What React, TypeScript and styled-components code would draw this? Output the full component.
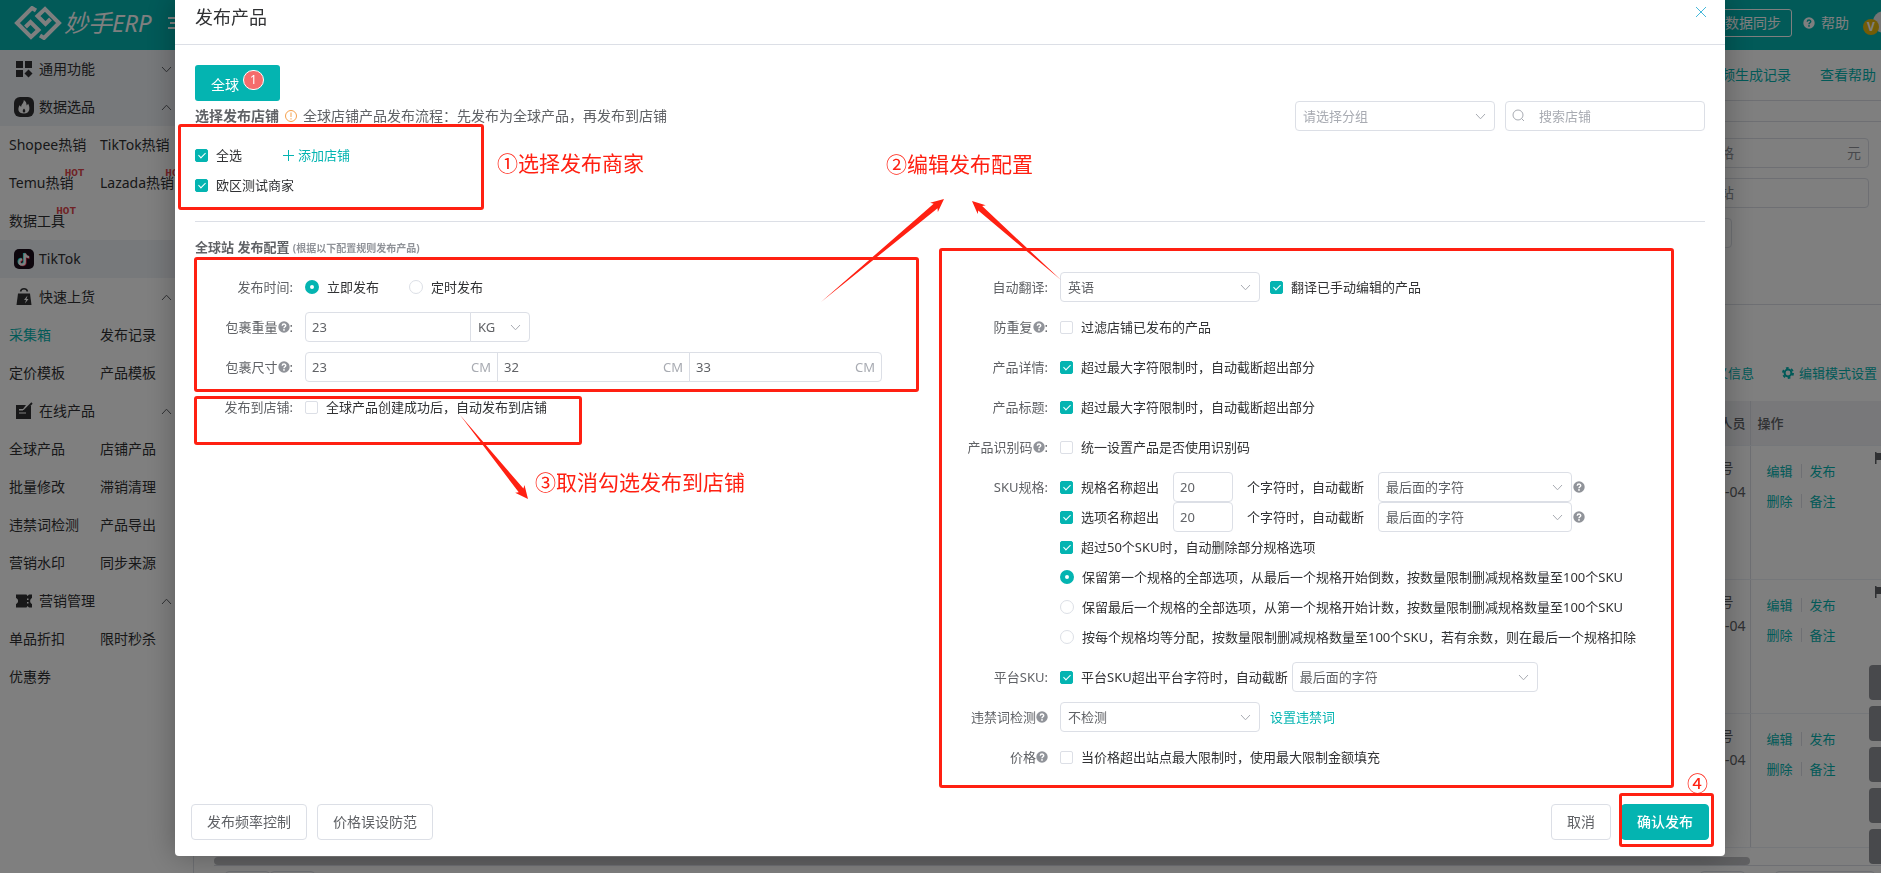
import React, { useId } from "react";
import styled, { createGlobalStyle, css } from "styled-components";

const teal = "#04b4b1";
const red = "#ff2012";
const line = "#dcdfe6";
const fontStack = '"Noto Sans", "Noto Sans CJK SC", sans-serif';

const GlobalStyle = createGlobalStyle`
  *, *::before, *::after { box-sizing: border-box; }
  body { margin: 0; background: #fff; font: 14px/20px ${fontStack}; color: #303133; overflow: hidden; }
  button, input, select { font: inherit; color: inherit; margin: 0; }
  a { color: ${teal}; text-decoration: none; }
`;

/* ---------- page behind the dialog ---------- */

const Page = styled.div`
  min-height: 100vh;
  display: flex;
  flex-direction: column;
`;

const TopBar = styled.header`
  height: 50px;
  background: ${teal};
  color: #fff;
  display: flex;
  align-items: center;
  justify-content: space-between;
  padding: 0 0 4px 14px;
`;

const Brand = styled.div`
  display: flex;
  align-items: center;
  gap: 2px;
`;

const BrandName = styled.span`
  font-size: 24px;
  line-height: 32px;
  font-style: italic;
`;

const MenuIcon = styled.svg`
  margin-left: 14px;
`;

const TopActions = styled.div`
  display: flex;
  align-items: center;
  gap: 11px;
`;

const SyncButton = styled.button`
  height: 28px;
  padding: 0 10px;
  border: 1px solid #fff;
  border-radius: 3px;
  background: none;
`;

const HelpEntry = styled.a`
  display: flex;
  align-items: center;
  gap: 6px;
  color: #fff;
`;

const Avatar = styled.div`
  position: relative;
  width: 21px;
  height: 32px;
  overflow: hidden;
  &::before {
    content: "";
    position: absolute;
    left: 13px;
    top: 4px;
    width: 22px;
    height: 22px;
    border-radius: 50%;
    background: #e8e8e8;
  }
`;

const VipMark = styled.span`
  position: absolute;
  left: 3px;
  top: 12px;
  width: 16px;
  height: 16px;
  border-radius: 50%;
  background: #e6b80c;
  font-size: 12px;
  line-height: 16px;
  font-weight: 700;
  text-align: center;
`;

const Columns = styled.div`
  flex: 1;
  display: flex;
`;

const SideNav = styled.nav`
  width: 194px;
  border-right: 1px solid ${line};
`;

const SideHeading = styled.div<{ $tinted?: boolean }>`
  height: 38px;
  padding: 0 21px 0 14px;
  display: flex;
  align-items: center;
  gap: 5px;
  background: ${(p) => (p.$tinted ? "#eff2f7" : "none")};
  & > svg + svg { margin-left: auto; }
`;

const SideLinks = styled.div`
  display: grid;
  grid-template-columns: 91px 1fr;
  padding-left: 9px;
`;

const SideLink = styled.a<{ $active?: boolean }>`
  height: 38px;
  line-height: 38px;
  white-space: nowrap;
  color: ${(p) => (p.$active ? teal : "#303133")};
`;

const HotWrap = styled.span`
  position: relative;
`;

const Hot = styled.span`
  position: absolute;
  right: -11px;
  top: -6px;
  font: 700 11px/12px "Liberation Mono", monospace;
  color: #e0474c;
`;

const Main = styled.main`
  flex: 1;
  display: flex;
  flex-direction: column;
`;

const LinkBar = styled.div`
  height: 51px;
  display: flex;
  align-items: center;
  justify-content: flex-end;
  gap: 29px;
  padding-right: 5px;
  border-bottom: 1px solid ${line};
`;

const FilterCard = styled.section`
  margin-top: 20px;
  height: 184px;
  padding: 16px 12px;
  border-top: 1px solid ${line};
  border-bottom: 1px solid ${line};
  display: flex;
  flex-direction: column;
  align-items: flex-end;
  gap: 10px;
  color: #909399;
`;

const FilterBox = styled.div<{ $short?: boolean }>`
  width: 200px;
  height: 30px;
  margin-right: ${(p) => (p.$short ? 137 : 0)}px;
  padding: 0 7px 0 50px;
  display: flex;
  align-items: center;
  justify-content: space-between;
  border: 1px solid ${line};
  border-radius: 4px;
`;

const ToolRow = styled.div`
  height: 96px;
  padding: 58px 4px 0 0;
  display: flex;
  justify-content: flex-end;
  gap: 28px;
  font-size: 13px;
  & a { display: flex; align-items: center; gap: 5px; height: 20px; }
`;

const DataTable = styled.table`
  width: calc(100% - 20px);
  margin-left: 20px;
  border-collapse: collapse;
  font-size: 13px;
  color: #606266;
  & th { height: 44px; background: #f0f1f4; font-weight: 500; border-bottom: 1px solid #ebeef5; text-align: right; padding: 0 4px; }
  & th:last-child { text-align: left; padding-left: 7px; }
  & td { height: 134px; padding: 10px 4px; vertical-align: top; text-align: right; border-bottom: 1px solid #ebeef5; font-size: 14px; line-height: 24px; }
  & td:last-child { width: 131px; padding: 10px 0 0 16px; text-align: left; font-size: 13px; }
  & th:last-child, & td:last-child { border-left: 1px solid ${line}; position: relative; }
`;

const OwnerName = styled.div`
  padding-right: 12px;
`;

const RowActions = styled.div`
  display: flex;
  height: 30px;
  align-items: center;
  gap: 8px;
`;

const Separator = styled.span`
  width: 1px;
  height: 14px;
  background: ${line};
`;

const RowFlag = styled.svg`
  position: absolute;
  right: 0;
  top: 6px;
`;

const TableScroll = styled.div`
  margin: 9px 131px 0 20px;
  height: 8px;
  border-radius: 4px;
  background: #c0c1c4;
`;

const Pager = styled.div`
  margin-left: 20px;
  padding: 5px 6px 0 11px;
  border-top: 1px solid ${line};
  display: flex;
  height: 9px;
  overflow: hidden;
`;

const PagerBox = styled.div<{ $width: number; $first?: boolean }>`
  width: ${(p) => p.$width}px;
  height: 30px;
  margin-left: ${(p) => (p.$first ? "auto" : 0)};
  margin-right: ${(p) => (p.$first ? 30 : 0)}px;
  border: 1px solid ${line};
  border-radius: 4px;
`;

const FloatTools = styled.div`
  position: fixed;
  right: 0;
  bottom: 9px;
  display: grid;
  gap: 6px;
`;

const FloatTool = styled.button`
  width: 12px;
  height: 35px;
  border: 0;
  border-radius: 4px 0 0 4px;
  background: #909399;
`;

/* ---------- dialog ---------- */

const Overlay = styled.div`
  position: fixed;
  inset: 0;
  padding: 0 156px 0 175px;
  background: rgba(0, 0, 0, 0.5);
`;

const Dialog = styled.section`
  position: relative;
  background: #fff;
  border-radius: 0 0 4px 4px;
  box-shadow: 0 0 30px rgba(0, 0, 0, 0.3);
`;

const DialogHead = styled.header`
  height: 45px;
  padding: 0 19px 10px 20px;
  display: flex;
  align-items: center;
  justify-content: space-between;
  border-bottom: 1px solid ${line};
`;

const DialogTitle = styled.h1`
  margin: 0;
  font-size: 18px;
  line-height: 24px;
  font-weight: 400;
`;

const CloseButton = styled.button`
  width: 10px;
  height: 10px;
  padding: 0;
  margin-bottom: 10px;
  border: 0;
  background: none;
  display: flex;
`;

const DialogBody = styled.div`
  padding: 20px 20px 16px;
  font-size: 13px;
`;

const SiteTab = styled.button`
  height: 36px;
  padding: 0 16px;
  border: 0;
  border-radius: 3px;
  background: ${teal};
  color: #fff;
  font-size: 14px;
  line-height: 20px;
  display: flex;
  gap: 4px;
  align-items: flex-start;
`;

const TabText = styled.span`
  padding-top: 10px;
`;

const Badge = styled.span`
  margin: 5px 0 0;
  width: 21px;
  height: 20px;
  border: 1px solid #fff;
  border-radius: 10px;
  background: #f56c6c;
  font-size: 12px;
  line-height: 18px;
`;

const ShopHead = styled.div`
  height: 30px;
  display: flex;
  align-items: center;
  font-size: 14px;
  color: #606266;
`;

const ShopTools = styled.div`
  margin-left: auto;
  display: flex;
  gap: 10px;
  font-size: 13px;
`;

const NoticeIcon = styled.svg`
  margin: 0 6px;
`;

const ShopRow = styled.div`
  height: 30px;
  display: flex;
  align-items: center;
`;

const ShopList = styled.div`
  padding: 9px 0 21px;
  border-bottom: 1px solid ${line};
`;

const AddShop = styled.a`
  margin-left: 40px;
  display: flex;
  align-items: center;
  gap: 4px;
`;

const SectionTitle = styled.h2`
  margin: 0;
  padding: 15px 0 14px;
  font-size: 13px;
  line-height: 20px;
  font-weight: 700;
  color: #606266;
  & small { font-size: 10px; color: #909399; }
`;

const FormColumns = styled.div`
  display: grid;
  grid-template-columns: 1fr 1fr;
`;

const FormColumn = styled.div`
  display: flex;
  flex-direction: column;
  gap: 10px;
`;

const FieldRow = styled.div`
  display: grid;
  grid-template-columns: 98px 1fr;
  gap: 12px;
`;

const FieldLabel = styled.div`
  height: 30px;
  display: flex;
  align-items: center;
  justify-content: flex-end;
  color: #606266;
  white-space: nowrap;
`;

const Line = styled.div<{ $gap?: number }>`
  min-height: 30px;
  display: flex;
  align-items: center;
  gap: ${(p) => p.$gap ?? 0}px;
  white-space: nowrap;
`;

const ChoiceLabel = styled.label`
  display: flex;
  align-items: center;
  gap: 8px;
  color: #303133;
`;

const CheckInput = styled.input`
  appearance: none;
  flex: none;
  position: relative;
  width: 13px;
  height: 13px;
  border: 1px solid ${line};
  border-radius: 2px;
  background: #fff;
  &:checked { background: ${teal}; border-color: ${teal}; }
  &:checked::after {
    content: "";
    position: absolute;
    left: 4px;
    top: 1px;
    width: 4px;
    height: 7px;
    border: solid #fff;
    border-width: 0 1px 1px 0;
    transform: rotate(45deg);
  }
`;

const RadioInput = styled.input`
  appearance: none;
  flex: none;
  width: 14px;
  height: 14px;
  border: 1px solid ${line};
  border-radius: 50%;
  background: #fff;
  &:checked { border: 5px solid ${teal}; }
`;

const controlBox = css`
  height: 30px;
  border: 1px solid ${line};
  border-radius: 4px;
  background: #fff;
  color: #606266;
  outline: 0;
`;

const TextInput = styled.input<{ $width: number }>`
  ${controlBox}
  width: ${(p) => p.$width}px;
  padding: 0 6px;
  &::placeholder { color: #a8abb2; opacity: 1; }
`;

const SelectWrap = styled.span<{ $width: number; $muted?: boolean }>`
  position: relative;
  width: ${(p) => p.$width}px;
  & select {
    ${controlBox}
    appearance: none;
    width: 100%;
    padding: 0 30px 0 7px;
    color: ${(p) => (p.$muted ? "#a8abb2" : "#606266")};
  }
  & svg {
    position: absolute;
    right: 9px;
    top: 12px;
    pointer-events: none;
  }
`;

const SearchWrap = styled.span`
  position: relative;
  & input { padding-left: 33px; }
  & svg { position: absolute; left: 7px; top: 8px; }
`;

const JoinedGroup = styled.div`
  display: flex;
  & > * + * { margin-left: -1px; }
  & > :not(:last-child), & > :not(:last-child) input { border-top-right-radius: 0; border-bottom-right-radius: 0; }
  & > :not(:first-child) select, & > :not(:first-child) input { border-top-left-radius: 0; border-bottom-left-radius: 0; }
`;

const UnitField = styled.label`
  position: relative;
`;

const Unit = styled.span`
  position: absolute;
  right: 7px;
  top: 5px;
  color: #a8abb2;
`;

const DialogFoot = styled.footer`
  padding: 16px;
  display: flex;
  gap: 10px;
`;

const FootButton = styled.button<{ $primary?: boolean; $push?: boolean }>`
  height: 36px;
  padding: 0 15px;
  border: 1px solid ${(p) => (p.$primary ? teal : line)};
  border-radius: 4px;
  background: ${(p) => (p.$primary ? teal : "#fff")};
  color: ${(p) => (p.$primary ? "#fff" : "#606266")};
  font-weight: ${(p) => (p.$primary ? 500 : 400)};
  margin-left: ${(p) => (p.$push ? "auto" : 0)};
`;

/* ---------- guide marks drawn over the dialog ---------- */

const MarkLayer = styled.div`
  position: absolute;
  inset: 0;
  pointer-events: none;
  color: ${red};
`;

const MarkBox = styled.div<{ $x: number; $y: number; $w: number; $h: number; $right?: boolean }>`
  position: absolute;
  ${(p) => (p.$right ? "right" : "left")}: ${(p) => p.$x}px;
  top: ${(p) => p.$y}px;
  width: ${(p) => p.$w}px;
  height: ${(p) => p.$h}px;
  border: 3px solid ${red};
  border-radius: 3px;
`;

const MarkText = styled.span<{ $x: number; $y: number }>`
  position: absolute;
  left: ${(p) => p.$x}px;
  top: ${(p) => p.$y}px;
  font-size: 21px;
  line-height: 30px;
  white-space: nowrap;
`;

const MarkArrows = styled.svg`
  position: absolute;
  left: 0;
  top: 0;
`;

const Chevron = ({ up = false, color = "#a8abb2" }: { up?: boolean; color?: string }) => (
  <svg width="11" height="7" viewBox="0 0 11 7" fill="none" stroke={color}>
    <path d={up ? "M1 6 5.500 1.200 10 6" : "M1 1 5.500 5.800 10 1"} />
  </svg>
);

const HelpMark = ({ fill = "#909399", ink = "#fff" }: { fill?: string; ink?: string }) => (
  <svg width="12" height="12" viewBox="0 0 12 12">
    <circle cx="6" cy="6" r="5.700" fill={fill} />
    <path d="M4.300 4.800C4.300 2.500 7.800 2.600 7.700 4.700 7.700 5.700 6 5.900 6 7.200" fill="none" stroke={ink} strokeWidth="1.500" />
    <circle cx="6" cy="8.900" r=".9" fill={ink} />
  </svg>
);

const Logo = () => (
  <svg width="48" height="34" viewBox="0 0 48 34" fill="none" stroke="#fff" strokeWidth="4">
    <path d="M22 4.500 18 2 3 17 17 31 24.500 24 16.500 16 11.500 21" />
    <path d="M26 29.500 30 32 45 17 31 3 23.500 10 31.500 18 36.500 13" />
  </svg>
);

const navIcons: Record<string, React.ReactNode> = {
  grid: <path d="M2 2h7v7H2zM11 2h7v7h-7zM2 11h7v7H2zM14.500 10.500 18.500 14.500 14.500 18.500 10.500 14.500z" fill="#303133" />,
  fire: (
    <>
      <rect width="20" height="20" rx="6" fill="#303133" />
      <path d="M9.800 3c2.400 1.600 2.800 3.400 2.800 5.600l1.600-1.800c2 3.400 2.200 9.700-4.200 9.700S3.600 11.500 5.600 8.200l1.600 1.900C7 7.500 9.900 6 9.800 3z" fill="#fff" />
      <path d="M10 11.500c1.800 1.600 1.600 4 0 4s-1.800-2.400 0-4z" fill="#303133" />
    </>
  ),
  tiktok: (
    <>
      <rect width="20" height="20" rx="5" fill="#1a0d1a" />
      <g fill="none" strokeWidth="2.200">
        <path d="M10 4v8.500a2.700 2.700 0 1 1-2.700-2.700M10 4c.3 2.300 1.800 3.500 4.200 3.600" stroke="#25f4ee" />
        <path d="M11.500 5v8.500a2.700 2.700 0 1 1-2.700-2.700M11.500 5c.3 2.300 1.800 3.500 4.200 3.600" stroke="#fe2c55" />
        <path d="M10.800 4.500V13a2.700 2.700 0 1 1-2.700-2.700M10.800 4.500c.3 2.300 1.800 3.500 4.200 3.600" stroke="#fff" />
      </g>
    </>
  ),
  bag: (
    <>
      <path d="M4 6.500h12L17.500 18h-15z" fill="#303133" />
      <path d="M6.500 4.500C7.500.8 12.500.8 13.500 4.500" fill="none" stroke="#303133" strokeWidth="1.500" />
      <path d="M13.500 8.500 10 13h2l-1 3.500 3.500-4.500h-2z" fill="#fff" />
    </>
  ),
  note: (
    <>
      <path d="M2 4h10L9 8H5v1h6l5-4h1v13H2z" fill="#303133" />
      <path d="M10 10 18 2" stroke="#303133" strokeWidth="1.800" />
      <path d="M5 9h4M5 12h7" stroke="#fff" strokeWidth="1.200" />
    </>
  ),
  ticket: <path d="M2 3.500h10.500l1 1.500 1.500-1.500h3V7c-2.400 1-2.400 5 0 6v3.500h-3L13.500 15l-1 1.500H2V13c2.800-1 2.800-5 0-6zM13 7.500v1.500h1.500V7.500zM13 11v1.500h1.500V11z" fill="#303133" fillRule="evenodd" />,
};

type NavGroup = { icon: string; title: string; tinted?: boolean; open?: boolean; plain?: boolean; links: string[] };

const navGroups: NavGroup[] = [
  { icon: "grid", title: "通用功能", tinted: true, links: [] },
  { icon: "fire", title: "数据选品", tinted: true, open: true, links: ["Shopee热销", "TikTok热销", "Temu热销", "Lazada热销", "数据工具"] },
  { icon: "tiktok", title: "TikTok", tinted: true, plain: true, links: [] },
  { icon: "bag", title: "快速上货", open: true, links: ["采集箱", "发布记录", "定价模板", "产品模板"] },
  { icon: "note", title: "在线产品", open: true, links: ["全球产品", "店铺产品", "批量修改", "滞销清理", "违禁词检测", "产品导出", "营销水印", "同步来源"] },
  { icon: "ticket", title: "营销管理", open: true, links: ["单品折扣", "限时秒杀", "优惠券"] },
];

const hotLinks = ["Temu热销", "Lazada热销", "数据工具"];

const Check = ({ children, on = false }: { children: React.ReactNode; on?: boolean }) => (
  <ChoiceLabel>
    <CheckInput type="checkbox" defaultChecked={on} />
    {children}
  </ChoiceLabel>
);

const Radio = ({ children, name, on = false }: { children: React.ReactNode; name: string; on?: boolean }) => (
  <ChoiceLabel>
    <RadioInput type="radio" name={name} defaultChecked={on} />
    {children}
  </ChoiceLabel>
);

const Select = ({ value, width, label, muted }: { value: string; width: number; label: string; muted?: boolean }) => (
  <SelectWrap $width={width} $muted={muted}>
    <select aria-label={label} defaultValue={value}>
      <option>{value}</option>
    </select>
    <Chevron />
  </SelectWrap>
);

const Field = ({ label, help, colon = true, children }: { label: string; help?: boolean; colon?: boolean; children: React.ReactNode }) => {
  const id = useId();
  return (
    <FieldRow role="group" aria-labelledby={id}>
      <FieldLabel id={id}>
        {label}
        {help && <HelpMark />}
        {colon && ":"}
      </FieldLabel>
      <div>{children}</div>
    </FieldRow>
  );
};

type Point = [number, number];

/* A stroke that swells from its tail towards a swept-back head. */
const arrowPoints = ([x0, y0]: Point, [x1, y1]: Point) => {
  const len = Math.hypot(x1 - x0, y1 - y0);
  const ux = (x1 - x0) / len;
  const uy = (y1 - y0) / len;
  const at = (back: number, side: number) => `${x1 - ux * back - uy * side},${y1 - uy * back + ux * side}`;
  return [`${x0},${y0}`, at(11, 3), at(13, 6), at(0, 0), at(13, -6), at(11, -3)].join(" ");
};

const arrows: [Point, Point][] = [
  [[646, 302], [769, 199]],
  [[886, 280], [797, 201]],
  [[285, 415], [353, 499]],
];

const LengthRule = ({ name }: { name: string }) => (
  <Line $gap={14}>
    <Check on>{name}</Check>
    <TextInput $width={60} aria-label={name} defaultValue="20" />
    <span>个字符时，自动截断</span>
    <Line $gap={1}>
      <Select width={194} label="截断位置" value="最后面的字符" />
      <HelpMark />
    </Line>
  </Line>
);

export default function App() {
  return (
    <>
      <GlobalStyle />
      <Page>
        <TopBar>
          <Brand>
            <Logo />
            <BrandName>妙手ERP</BrandName>
            <MenuIcon width="16" height="16" viewBox="0 0 16 16" stroke="#fff" strokeWidth="2">
              <path d="M0 3h16M2 8h14M0 13h16" />
            </MenuIcon>
          </Brand>
          <TopActions>
            <SyncButton>数据同步</SyncButton>
            <HelpEntry href="#help">
              <HelpMark fill="#fff" ink={teal} />
              帮助
            </HelpEntry>
            <Avatar>
              <VipMark>V</VipMark>
            </Avatar>
          </TopActions>
        </TopBar>
        <Columns>
          <SideNav>
            {navGroups.map((group) => (
              <React.Fragment key={group.title}>
                <SideHeading $tinted={group.tinted}>
                  <svg width="20" height="20" viewBox="0 0 20 20">{navIcons[group.icon]}</svg>
                  {group.title}
                  {!group.plain && <Chevron up={group.open} color="#606266" />}
                </SideHeading>
                <SideLinks>
                  {group.links.map((name) => (
                    <SideLink key={name} href="#nav" $active={name === "采集箱"}>
                      <HotWrap>
                        {name}
                        {hotLinks.includes(name) && <Hot>HOT</Hot>}
                      </HotWrap>
                    </SideLink>
                  ))}
                </SideLinks>
              </React.Fragment>
            ))}
          </SideNav>
          <Main>
            <LinkBar>
              <a href="#videos">视频生成记录</a>
              <a href="#guide">查看帮助</a>
            </LinkBar>
            <FilterCard>
              <FilterBox><span>格</span><span>元</span></FilterBox>
              <FilterBox>站</FilterBox>
              <FilterBox $short />
            </FilterCard>
            <ToolRow>
              <a href="#info">定义信息</a>
              <a href="#mode">
                <svg width="12" height="12" viewBox="0 0 12 12" fill="none" stroke={teal}>
                  <circle cx="6" cy="6" r="3.400" strokeWidth="2" />
                  <circle cx="6" cy="6" r="5" strokeWidth="2" strokeDasharray="2.600 2.636" />
                </svg>
                编辑模式设置
              </a>
            </ToolRow>
            <DataTable>
              <thead>
                <tr><th>人员</th><th>操作</th></tr>
              </thead>
              <tbody>
                {[1, 2, 3].map((row) => (
                  <tr key={row}>
                    <td><OwnerName>号</OwnerName>-04</td>
                    <td>
                      <RowActions><a href="#edit">编辑</a><Separator /><a href="#publish">发布</a></RowActions>
                      <RowActions><a href="#delete">删除</a><Separator /><a href="#note">备注</a></RowActions>
                      <RowFlag width="6" height="12" viewBox="0 0 6 12"><path d="M0 0h1.500v12H0zM1.500 1H6v7H1.500z" fill="#606266" /></RowFlag>
                    </td>
                  </tr>
                ))}
              </tbody>
            </DataTable>
            <TableScroll />
            <Pager>
              <PagerBox $width={45} />
              <PagerBox $width={45} />
              <PagerBox $width={45} $first />
              <PagerBox $width={100} />
            </Pager>
          </Main>
        </Columns>
        <FloatTools>
          {["客服", "消息", "文档", "反馈", "置顶"].map((name) => <FloatTool key={name} aria-label={name} />)}
        </FloatTools>
      </Page>

      <Overlay>
        <Dialog role="dialog" aria-labelledby="dialog-title">
          <DialogHead>
            <DialogTitle id="dialog-title">发布产品</DialogTitle>
            <CloseButton aria-label="关闭">
              <svg width="10" height="10" viewBox="0 0 10 10" stroke="#46b8da"><path d="M0 0 10 10M10 0 0 10" /></svg>
            </CloseButton>
          </DialogHead>
          <DialogBody>
            <SiteTab>
              <TabText>全球</TabText>
              <Badge>1</Badge>
            </SiteTab>
            <ShopHead>
              <b>选择发布店铺</b>
              <NoticeIcon width="12" height="12" viewBox="0 0 12 12" fill="none" stroke="#f5a04c">
                <circle cx="6" cy="6" r="5.500" />
                <path d="M6 2.500v4.500M6 8.200v1.300" />
              </NoticeIcon>
              <span>全球店铺产品发布流程：先发布为全球产品，再发布到店铺</span>
              <ShopTools>
                <Select width={200} label="店铺分组" value="请选择分组" muted />
                <SearchWrap>
                  <TextInput $width={200} aria-label="搜索店铺" placeholder="搜索店铺" />
                  <svg width="13" height="13" viewBox="0 0 13 13" fill="none" stroke="#a8abb2"><circle cx="6" cy="6" r="5" /><path d="M9.500 9.500 12 12" /></svg>
                </SearchWrap>
              </ShopTools>
            </ShopHead>
            <ShopList>
              <ShopRow>
                <Check on>全选</Check>
                <AddShop href="#add">
                  <svg width="12" height="12" viewBox="0 0 12 12" stroke={teal}><path d="M6.500 1v11M1 6.500h11" /></svg>
                  添加店铺
                </AddShop>
              </ShopRow>
              <ShopRow>
                <Check on>欧区测试商家</Check>
              </ShopRow>
            </ShopList>
            <SectionTitle>全球站 发布配置 <small>(根据以下配置规则发布产品)</small></SectionTitle>
            <FormColumns>
              <FormColumn>
                <Field label="发布时间">
                  <Line $gap={30}>
                    <Radio name="time" on>立即发布</Radio>
                    <Radio name="time">定时发布</Radio>
                  </Line>
                </Field>
                <Field label="包裹重量" help>
                  <JoinedGroup>
                    <TextInput $width={166} aria-label="包裹重量" defaultValue="23" />
                    <Select width={60} label="重量单位" value="KG" />
                  </JoinedGroup>
                </Field>
                <Field label="包裹尺寸" help>
                  <JoinedGroup>
                    {["23", "32", "33"].map((size, i) => (
                      <UnitField key={size}>
                        <TextInput $width={193} aria-label={["长", "宽", "高"][i]} defaultValue={size} />
                        <Unit>CM</Unit>
                      </UnitField>
                    ))}
                  </JoinedGroup>
                </Field>
                <Field label="发布到店铺">
                  <Line><Check>全球产品创建成功后，自动发布到店铺</Check></Line>
                </Field>
              </FormColumn>
              <FormColumn>
                <Field label="自动翻译">
                  <Line $gap={10}>
                    <Select width={200} label="自动翻译" value="英语" />
                    <Check on>翻译已手动编辑的产品</Check>
                  </Line>
                </Field>
                <Field label="防重复" help>
                  <Line><Check>过滤店铺已发布的产品</Check></Line>
                </Field>
                <Field label="产品详情">
                  <Line><Check on>超过最大字符限制时，自动截断超出部分</Check></Line>
                </Field>
                <Field label="产品标题">
                  <Line><Check on>超过最大字符限制时，自动截断超出部分</Check></Line>
                </Field>
                <Field label="产品识别码" help>
                  <Line><Check>统一设置产品是否使用识别码</Check></Line>
                </Field>
                <Field label="SKU规格">
                  <LengthRule name="规格名称超出" />
                  <LengthRule name="选项名称超出" />
                  <Line><Check on>超过50个SKU时，自动删除部分规格选项</Check></Line>
                  <Line><Radio name="trim" on>保留第一个规格的全部选项，从最后一个规格开始倒数，按数量限制删减规格数量至100个SKU</Radio></Line>
                  <Line><Radio name="trim">保留最后一个规格的全部选项，从第一个规格开始计数，按数量限制删减规格数量至100个SKU</Radio></Line>
                  <Line><Radio name="trim">按每个规格均等分配，按数量限制删减规格数量至100个SKU，若有余数，则在最后一个规格扣除</Radio></Line>
                </Field>
                <Field label="平台SKU">
                  <Line $gap={4}>
                    <Check on>平台SKU超出平台字符时，自动截断</Check>
                    <Select width={246} label="平台SKU截断位置" value="最后面的字符" />
                  </Line>
                </Field>
                <Field label="违禁词检测" help colon={false}>
                  <Line $gap={10}>
                    <Select width={200} label="违禁词检测" value="不检测" />
                    <a href="#words">设置违禁词</a>
                  </Line>
                </Field>
                <Field label="价格" help colon={false}>
                  <Line><Check>当价格超出站点最大限制时，使用最大限制金额填充</Check></Line>
                </Field>
              </FormColumn>
            </FormColumns>
          </DialogBody>
          <DialogFoot>
            <FootButton>发布频率控制</FootButton>
            <FootButton>价格误设防范</FootButton>
            <FootButton $push>取消</FootButton>
            <FootButton $primary>确认发布</FootButton>
          </DialogFoot>
          <MarkLayer>
            <MarkBox $x={3} $y={124} $w={306} $h={86} />
            <MarkBox $x={19} $y={257} $w={725} $h={135} />
            <MarkBox $x={19} $y={396} $w={388} $h={49} />
            <MarkBox $x={51} $y={248} $w={735} $h={540} $right />
            <MarkBox $x={11} $y={793} $w={95} $h={54} $right />
            <MarkArrows width="1550" height="600" fill={red}>
              {arrows.map(([tail, tip]) => <polygon key={tail.join()} points={arrowPoints(tail, tip)} />)}
            </MarkArrows>
            <MarkText $x={322} $y={148}>①选择发布商家</MarkText>
            <MarkText $x={711} $y={149}>②编辑发布配置</MarkText>
            <MarkText $x={360} $y={467}>③取消勾选发布到店铺</MarkText>
            <MarkText $x={1512} $y={768}>④</MarkText>
          </MarkLayer>
        </Dialog>
      </Overlay>
    </>
  );
}
